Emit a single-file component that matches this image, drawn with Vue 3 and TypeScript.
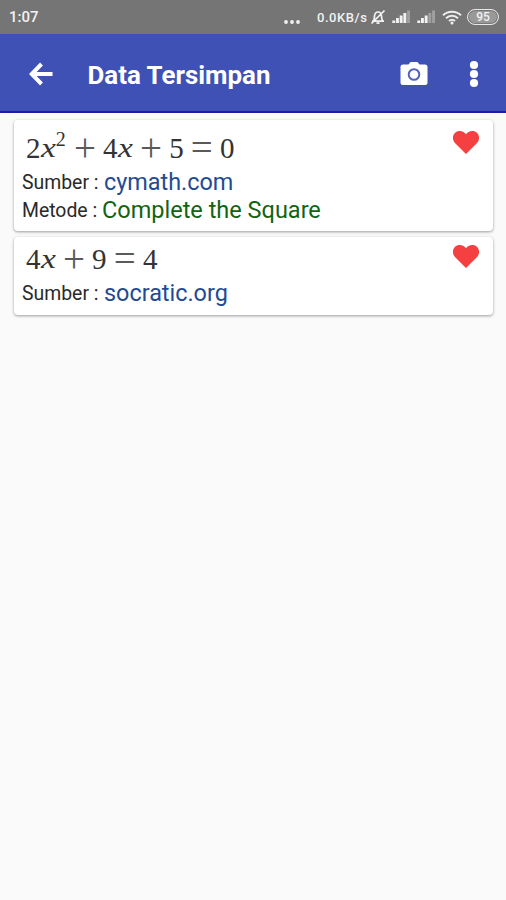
<script setup lang="ts">
interface Token {
  text: string
  kind: 'num' | 'var' | 'sup' | 'op'
}

interface SavedItem {
  id: number
  formula: Token[]
  source: string
  method?: string
}

const num = (text: string): Token => ({ text, kind: 'num' })
const variable = (text: string): Token => ({ text, kind: 'var' })
const sup = (text: string): Token => ({ text, kind: 'sup' })
const op = (text: string): Token => ({ text, kind: 'op' })

const items: SavedItem[] = [
  {
    id: 1,
    formula: [num('2'), variable('x'), sup('2'), op('+'), num('4'), variable('x'), op('+'), num('5'), op('='), num('0')],
    source: 'cymath.com',
    method: 'Complete the Square',
  },
  {
    id: 2,
    formula: [num('4'), variable('x'), op('+'), num('9'), op('='), num('4')],
    source: 'socratic.org',
  },
]

const bars = [0, 1, 2, 3, 4]
</script>

<template>
  <div class="screen">
    <header class="status">
      <span class="time">1:07</span>
      <svg class="more" width="16" height="4" viewBox="0 0 16 4">
        <circle cx="2" cy="2" r="1.9" /><circle cx="8" cy="2" r="1.9" /><circle cx="14" cy="2" r="1.9" />
      </svg>
      <span class="speed">0.0KB/s</span>
      <svg class="bell" width="16" height="16" viewBox="0 0 16 16">
        <path d="M2 12.200h12M3.500 12c1-1.500.8-3 1-5C4.800 4.500 6 3 8 3s3.300 1.500 3.500 4c.2 2 .1 3.500 1.200 5M6.500 14.200h3M1.500 14.500 14.500 1.500" />
      </svg>
      <svg v-for="n in 2" :key="n" class="signal" width="19" height="14" viewBox="0 0 19 14">
        <rect
          v-for="b in bars"
          :key="b"
          :x="b * 3.7 + 0.3"
          :y="10.5 - b * 2.5"
          width="2.9"
          :height="2.5 + b * 2.5"
          :class="{ dim: b > 4.5 - n }"
        />
      </svg>
      <svg class="wifi" width="20" height="15" viewBox="0 0 20 15">
        <path d="M1 5.200c5-4.700 13-4.700 18 0M4 8.200c3.500-3.200 8.500-3.200 12 0M7 11.100c1.800-1.600 4.200-1.600 6 0" />
        <circle cx="10" cy="13" r="1.500" />
      </svg>
      <span class="battery">95</span>
    </header>

    <nav class="toolbar">
      <svg class="back" width="24" height="24" viewBox="0 0 24 24">
        <path d="M23.500 12H3M12.500 2 2.800 12l9.700 10" />
      </svg>
      <h1 class="title">Data Tersimpan</h1>
      <svg class="camera" width="28" height="25" viewBox="0 0 28 25">
        <path d="M3 3.500h5.500L10.500 1h7l2 2.500H25a2.500 2.500 0 0 1 2.500 2.500v15.500A2.500 2.500 0 0 1 25 24H3A2.500 2.500 0 0 1 .5 21.500V6A2.500 2.500 0 0 1 3 3.500Z" />
        <circle cx="14" cy="13.500" r="5.300" />
      </svg>
      <svg class="menu" width="10" height="28" viewBox="0 0 10 28">
        <circle cx="5" cy="5" r="4.100" /><circle cx="5" cy="14" r="4.100" /><circle cx="5" cy="23" r="4.100" />
      </svg>
    </nav>

    <main class="list">
      <article v-for="item in items" :key="item.id" class="card">
        <div class="body">
          <div class="formula">
            <span v-for="(t, i) in item.formula" :key="i" :class="t.kind">{{ t.text }}</span>
          </div>
          <p class="row">
            <span class="label">Sumber :</span><span class="source">{{ item.source }}</span>
          </p>
          <p v-if="item.method" class="row">
            <span class="label short">Metode :</span><span class="method">{{ item.method }}</span>
          </p>
        </div>
        <svg class="heart" width="28" height="25" viewBox="0 0 28 25">
          <path d="M14 24 3.200 13.300C.2 10.200.2 5.500 2.900 2.900 6-.1 11 .3 14 4.200 17 .3 22-.1 25.100 2.900c2.700 2.600 2.700 7.300-.3 10.400Z" />
        </svg>
      </article>
    </main>
  </div>
</template>

<style>
body {
  background: #fafafa;
}
</style>

<style scoped>
.screen {
  min-height: 900px;
  background: #fafafa;
  font-family: Roboto, "Liberation Sans", sans-serif;
}
svg {
  display: block;
  flex: none;
}
.status {
  height: 34px;
  box-sizing: border-box;
  padding: 0 7px 0 9px;
  display: flex;
  align-items: center;
  background: #757575;
  color: #f2f2f2;
  fill: #f2f2f2;
  font-weight: 500;
}
.time {
  padding-top: 1px;
  font-size: 15px;
  line-height: 33px;
}
.more {
  margin: 9px 17px 0 auto;
}
.speed {
  width: 52px;
  font-size: 13px;
  letter-spacing: 0.55px;
  white-space: nowrap;
}
.bell {
  margin-left: 1px;
  margin-right: 6px;
  fill: none;
  stroke: #f2f2f2;
  stroke-width: 1.7;
}
.signal {
  margin-right: 6px;
}
.dim {
  opacity: 0.35;
}
.wifi path {
  fill: none;
  stroke: #eee;
  stroke-width: 2;
}
.battery {
  box-sizing: border-box;
  width: 32px;
  height: 16px;
  margin-left: 5px;
  border: 1.5px solid #e8e8e8;
  border-radius: 8px;
  background: #999;
  box-shadow: inset 0 0 0 1px #777;
  font-size: 12px;
  line-height: 14px;
  text-align: center;
}
.toolbar {
  height: 79px;
  box-sizing: border-box;
  padding: 2px 27px 0 29px;
  display: flex;
  align-items: center;
  background: #3f51b5;
  border-bottom: 2px solid #1c1ca4;
  fill: #fff;
}
.back {
  fill: none;
  stroke: #fff;
  stroke-width: 4;
}
.title {
  flex: 1;
  margin: 2px 0 0 34.5px;
  color: #fff;
  font-size: 25.9px;
  font-weight: 700;
  line-height: 32px;
  white-space: nowrap;
}
.camera circle {
  fill: none;
  stroke: #5362bd;
  stroke-width: 2;
}
.menu {
  margin-left: 41.5px;
}
.list {
  padding: 7px 13px 0 14px;
  display: flex;
  flex-direction: column;
  gap: 6px;
}
.card {
  display: flex;
  justify-content: space-between;
  box-sizing: border-box;
  padding: 7px 13px 7px 8px;
  background: #fff;
  border-radius: 4px;
  box-shadow: 0 1px 3px rgba(0, 0, 0, 0.38);
}
.formula {
  display: flex;
  height: 37px;
  padding-left: 4px;
  margin-bottom: 5px;
  color: #333;
  font-family: "Liberation Serif", serif;
  font-size: 29px;
  line-height: 42px;
}
.card:first-child {
  padding-bottom: 6px;
}
.card + .card {
  padding-top: 1px;
}
.num {
  width: 14.5px;
}
.var {
  width: 15.3px;
  font-size: 28px;
  font-style: italic;
  transform: scaleX(1.2);
  transform-origin: left;
}
.sup {
  width: 11px;
  font-size: 20px;
  line-height: 25px;
}
.op {
  width: 36.3px;
  color: #5a5a5a;
  font-size: 39px;
  line-height: 42px;
  text-align: center;
}
.row {
  height: 28px;
  margin: 0;
  display: flex;
  line-height: 28px;
  white-space: nowrap;
}
.label {
  width: 82px;
  color: #292929;
  font-size: 19.4px;
}
.short {
  width: 80px;
}
.source,
.method {
  line-height: 26px;
}
.source {
  color: #234b92;
  font-size: 23.4px;
}
.method {
  color: #126412;
  font-size: 23.5px;
}
.heart {
  margin-top: 3px;
  fill: #f44040;
}
.card + .card .heart {
  margin-top: 6px;
}
</style>
